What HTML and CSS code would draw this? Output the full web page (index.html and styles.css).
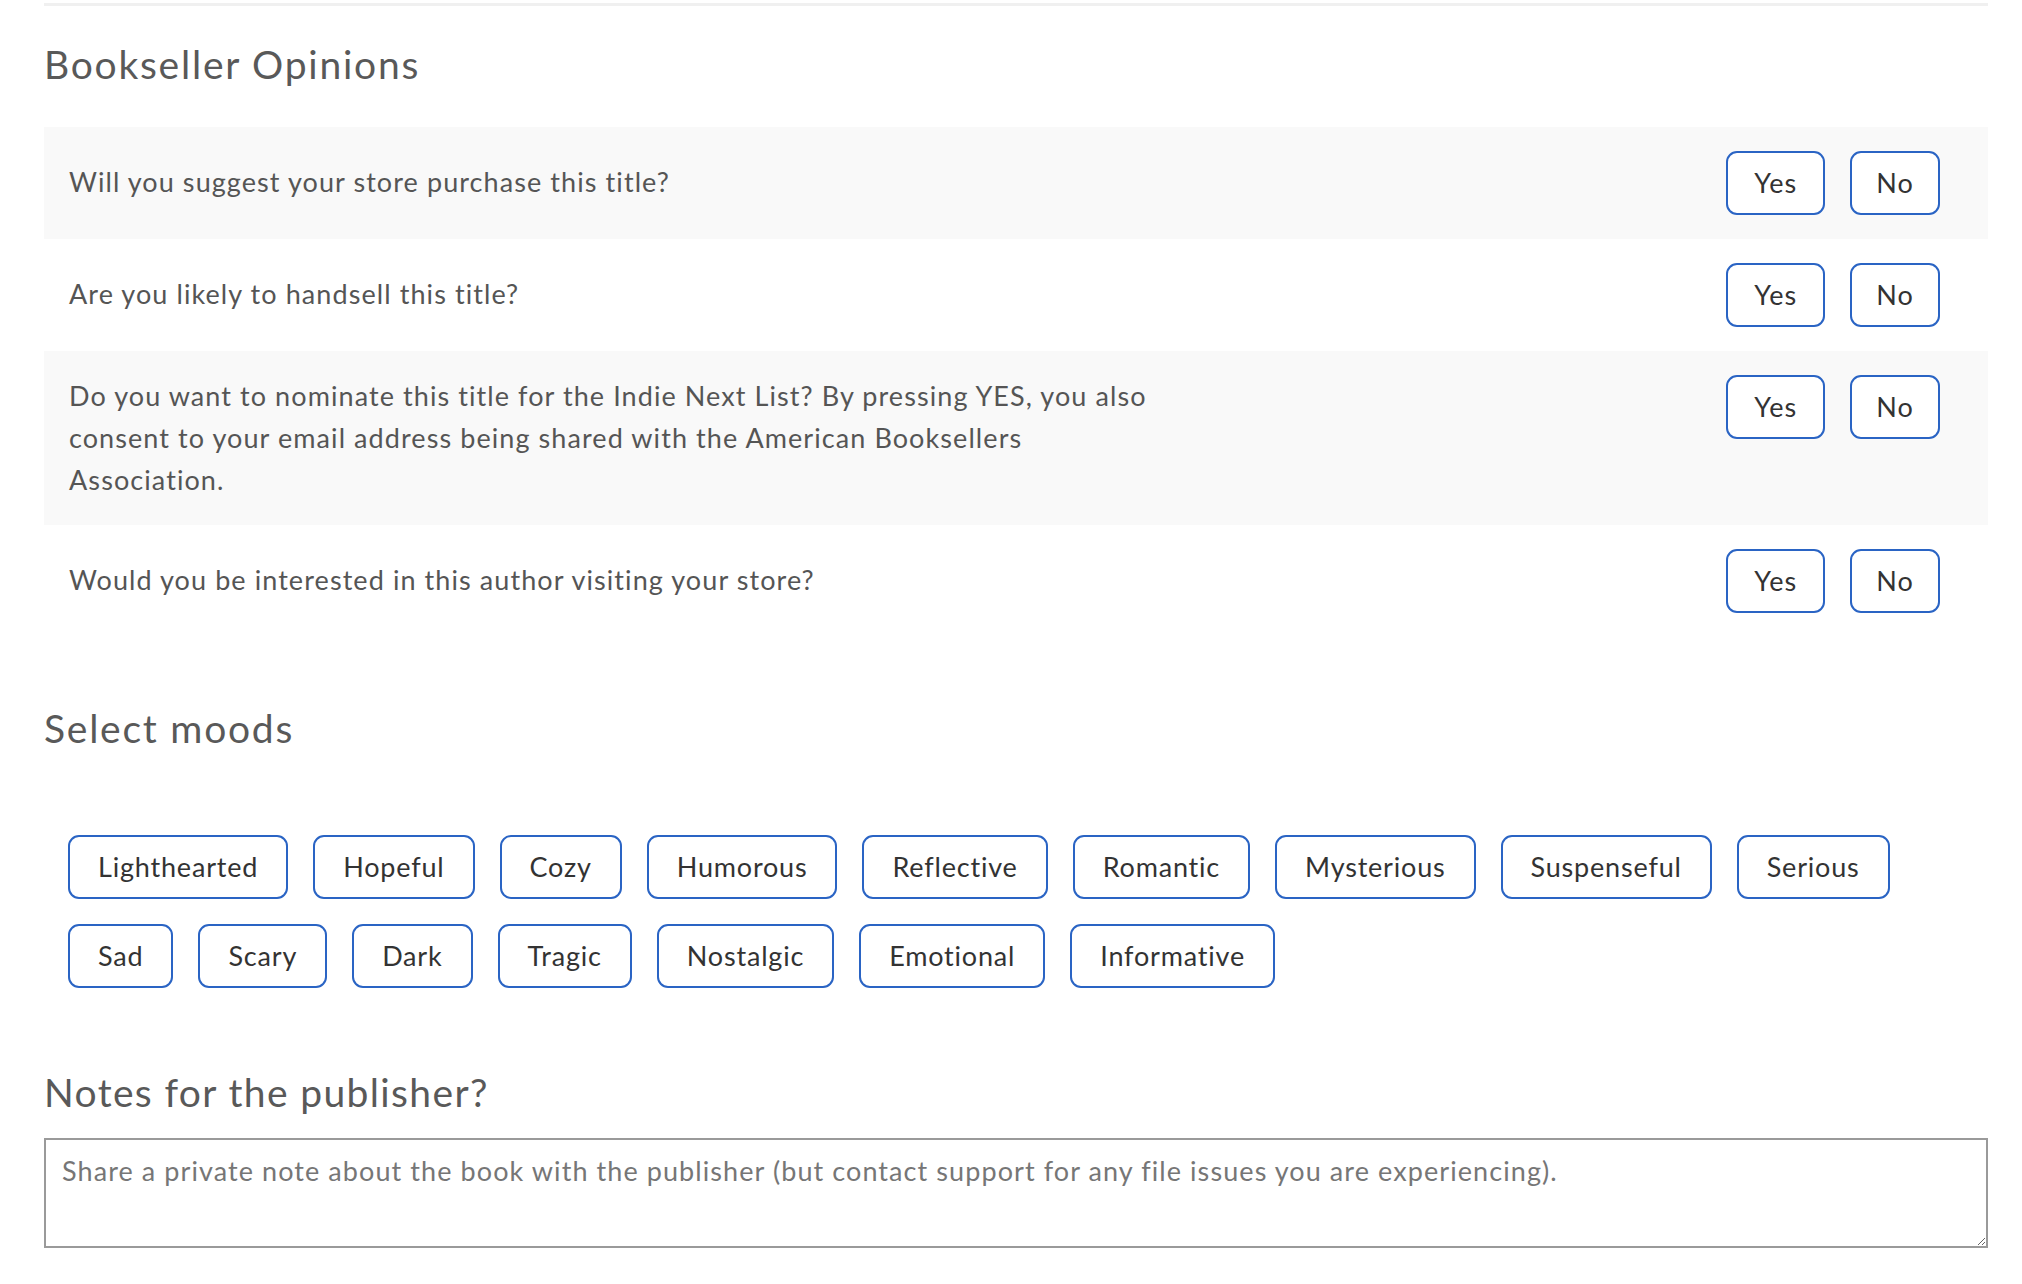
FILE: index.html
```html
<!DOCTYPE html>
<html lang="en">
<head>
<meta charset="utf-8">
<title>Bookseller Opinions</title>
<link rel="stylesheet" href="styles.css">
</head>
<body>
<div class="page">
  <div class="divider"></div>

  <section class="opinions">
    <h2 class="section-title title-opinions">Bookseller Opinions</h2>
    <div class="question-list">
      <div class="question">
        <p class="question-text">Will you suggest your store purchase this title?</p>
        <div class="choices">
          <button class="choice">Yes</button>
          <button class="choice">No</button>
        </div>
      </div>
      <div class="question">
        <p class="question-text">Are you likely to handsell this title?</p>
        <div class="choices">
          <button class="choice">Yes</button>
          <button class="choice">No</button>
        </div>
      </div>
      <div class="question">
        <p class="question-text">Do you want to nominate this title for the Indie Next List? By pressing YES, you also consent to your email address being shared with the American Booksellers Association.</p>
        <div class="choices">
          <button class="choice">Yes</button>
          <button class="choice">No</button>
        </div>
      </div>
      <div class="question">
        <p class="question-text">Would you be interested in this author visiting your store?</p>
        <div class="choices">
          <button class="choice">Yes</button>
          <button class="choice">No</button>
        </div>
      </div>
    </div>
  </section>

  <section class="moods">
    <h2 class="section-title title-moods">Select moods</h2>
    <div class="mood-list">
      <button class="mood">Lighthearted</button>
      <button class="mood">Hopeful</button>
      <button class="mood">Cozy</button>
      <button class="mood">Humorous</button>
      <button class="mood">Reflective</button>
      <button class="mood">Romantic</button>
      <button class="mood">Mysterious</button>
      <button class="mood">Suspenseful</button>
      <button class="mood">Serious</button>
      <button class="mood">Sad</button>
      <button class="mood">Scary</button>
      <button class="mood">Dark</button>
      <button class="mood">Tragic</button>
      <button class="mood">Nostalgic</button>
      <button class="mood">Emotional</button>
      <button class="mood">Informative</button>
    </div>
  </section>

  <section class="notes">
    <h2 class="section-title title-notes">Notes for the publisher?</h2>
    <textarea class="notes-input" placeholder="Share a private note about the book with the publisher (but contact support for any file issues you are experiencing)."></textarea>
  </section>
</div>
</body>
</html>
```

FILE: styles.css
```css
* {
  box-sizing: border-box;
}

html, body {
  margin: 0;
  padding: 0;
  background: #ffffff;
}

body {
  font-family: "Lato", "Open Sans", sans-serif;
  font-size: 27px;
  letter-spacing: 0.04em;
  color: #555555;
}

.page {
  width: 1944px;
  margin-left: 44px;
  padding-top: 3px;
}

.divider {
  height: 3px;
  background: #f0f0f0;
}

.section-title {
  margin: 0;
  font-size: 39px;
  font-weight: 400;
  line-height: 1.2;
  letter-spacing: 0.045em;
  color: #595959;
}

.title-opinions {
  margin-top: 35px;
  margin-bottom: 39px;
}

.question {
  display: flex;
  align-items: flex-start;
  justify-content: space-between;
  padding: 24px 48px 24px 25px;
}

.question:nth-child(odd) {
  background: #f9f9f9;
}

.question-text {
  margin: 0;
  max-width: 1100px;
  min-height: 62px;
  display: flex;
  align-items: center;
  line-height: 42px;
  color: #555555;
}

.choices {
  display: flex;
  gap: 25px;
  flex-shrink: 0;
}

.choice,
.mood {
  height: 64px;
  background: #ffffff;
  border: 2px solid #2a64c4;
  border-radius: 11px;
  color: #333333;
  font-family: inherit;
  font-size: 27px;
  letter-spacing: 0.04em;
  line-height: 1;
  cursor: pointer;
}

.choice {
  padding: 0 24px;
}

.choice:first-child {
  padding: 0 26px;
}

.title-moods {
  margin-top: 68px;
  margin-bottom: 83px;
}

.title-notes {
  letter-spacing: 0.035em;
}

.mood-list {
  display: flex;
  flex-wrap: wrap;
  gap: 25px;
  padding-left: 24px;
  padding-right: 24px;
}

.mood {
  padding: 0 28px;
  letter-spacing: 0.03em;
}

.title-notes {
  margin-top: 81px;
  margin-bottom: 23px;
}

.notes-input {
  display: block;
  width: 100%;
  height: 110px;
  margin: 0;
  padding: 11px 16px;
  border: 2px solid #9a9a9a;
  border-radius: 0;
  font-family: inherit;
  font-size: 27px;
  letter-spacing: 0.04em;
  line-height: 40px;
  color: #333333;
  resize: vertical;
}

.notes-input::placeholder {
  color: #767676;
  opacity: 1;
}
```
